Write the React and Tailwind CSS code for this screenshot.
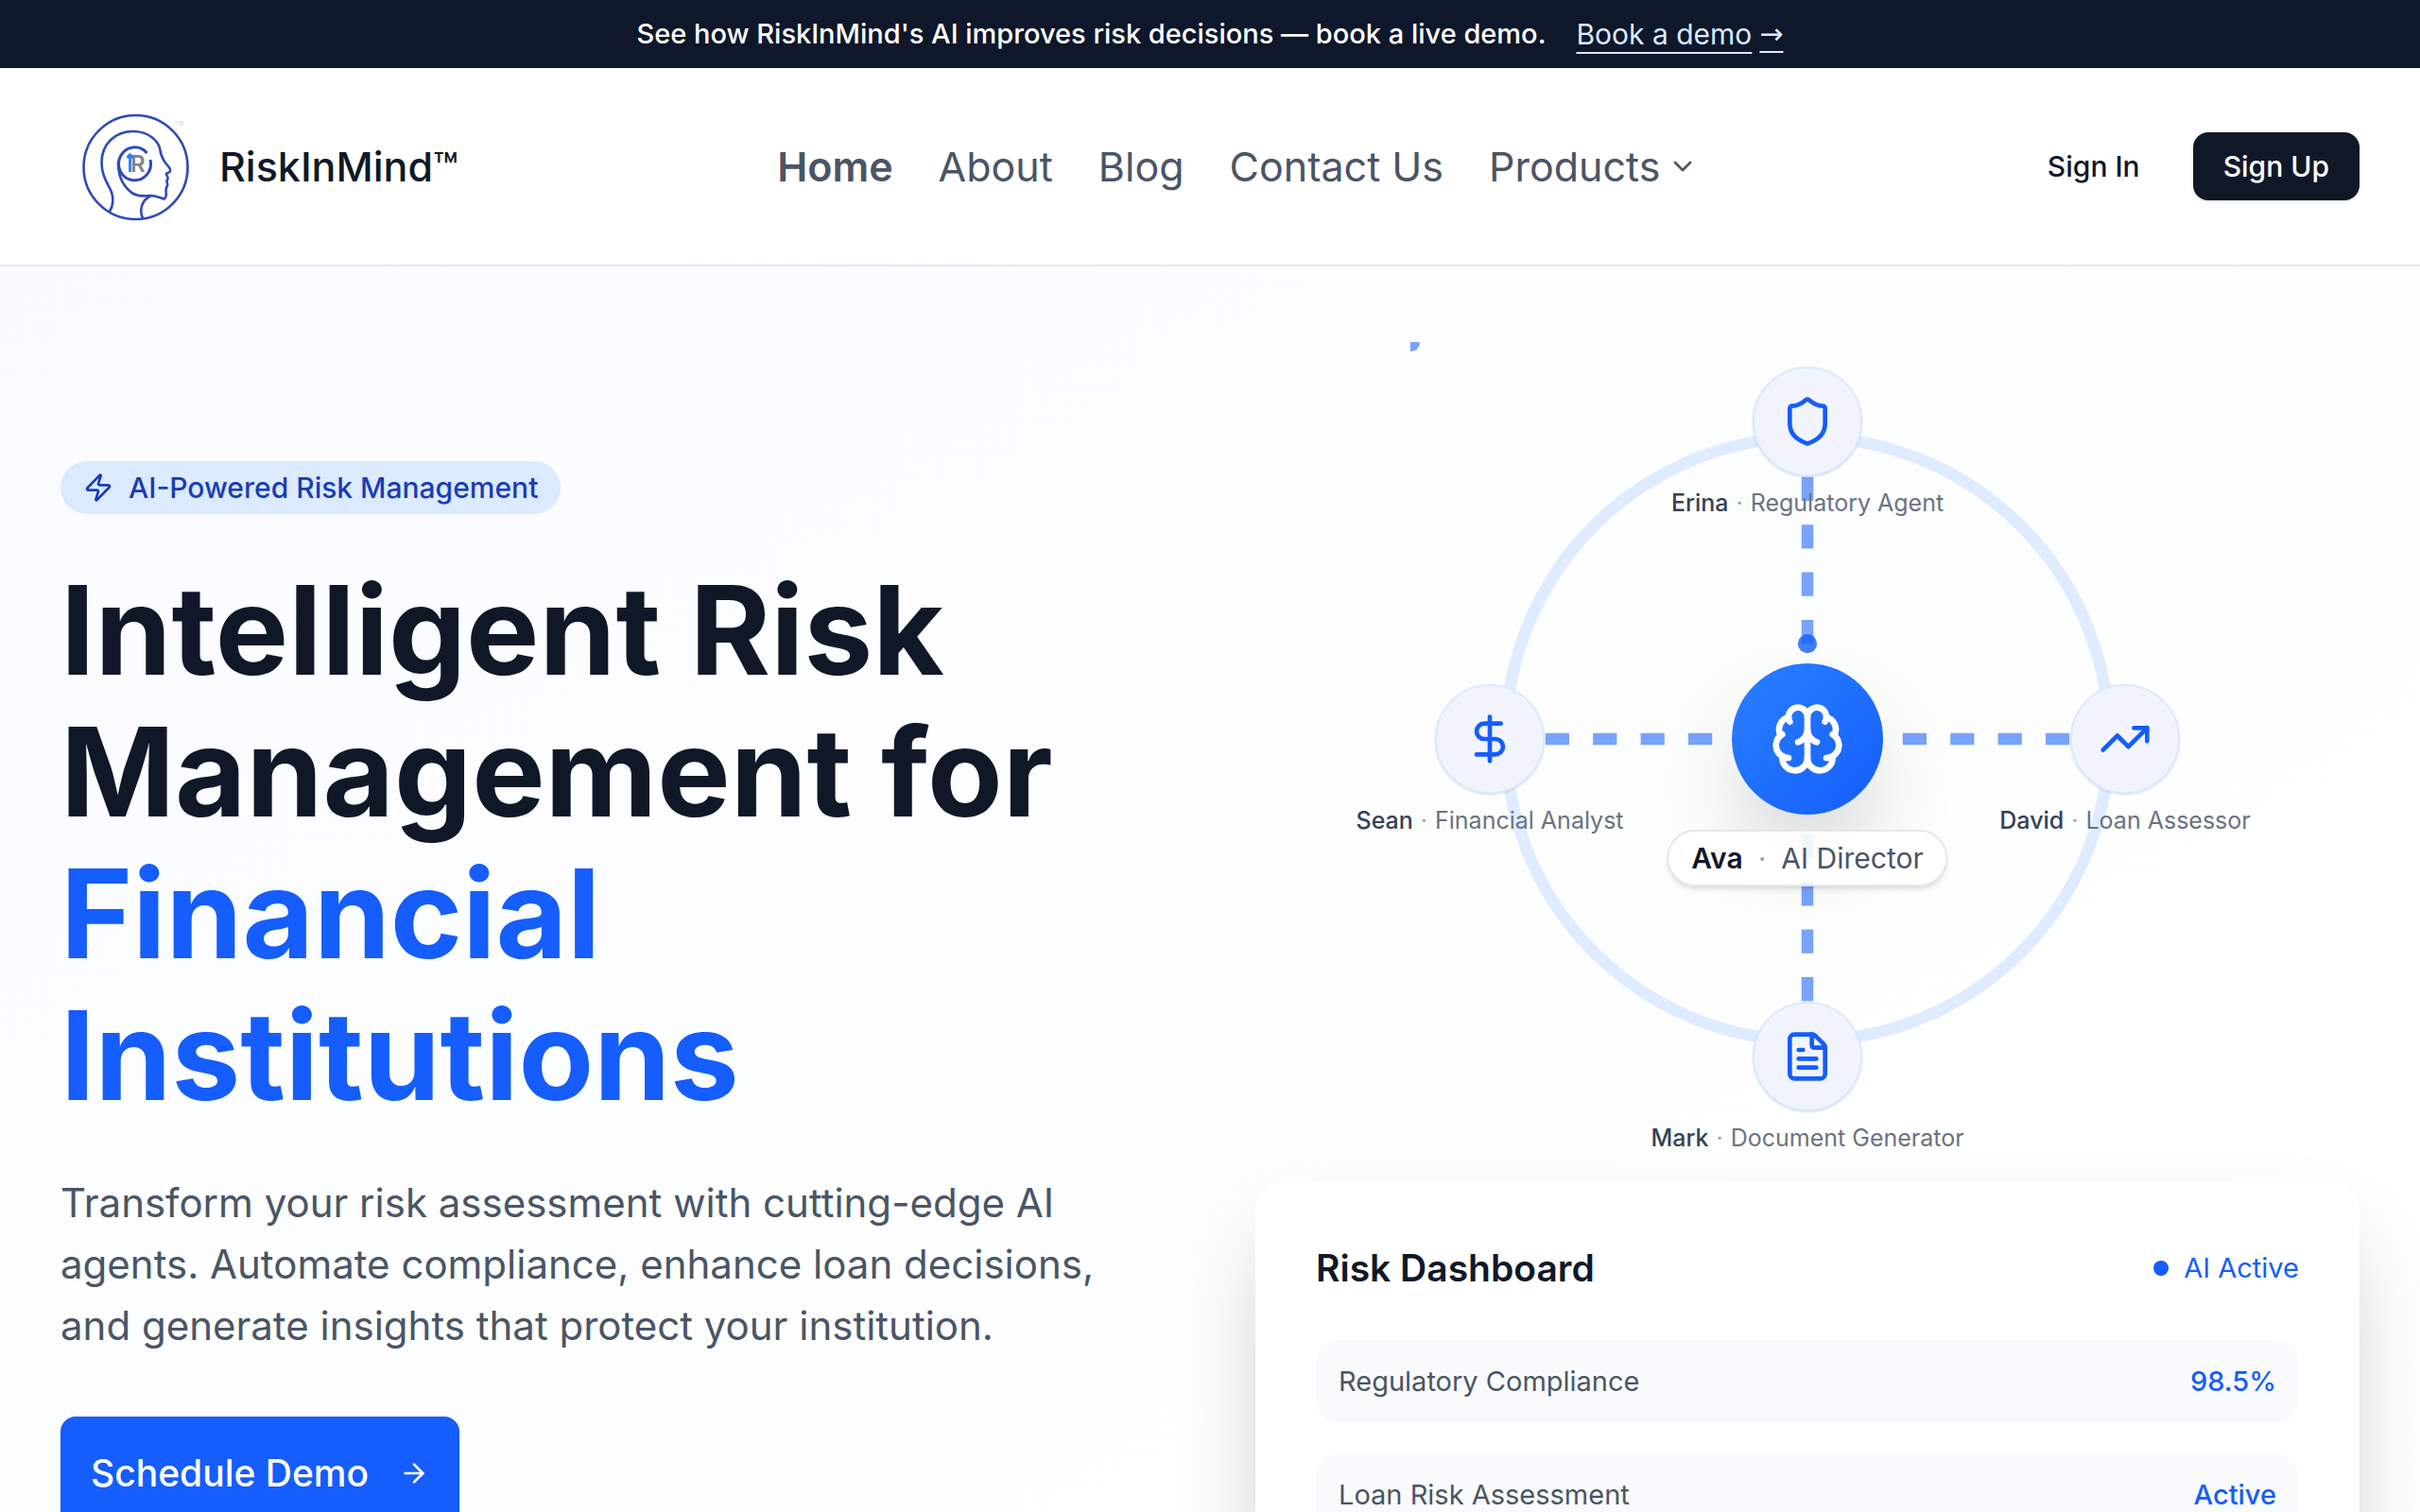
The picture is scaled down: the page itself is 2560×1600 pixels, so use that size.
import { ArrowRight, Brain, ChevronDown, DollarSign, FileText, Shield, TrendingUp, Zap } from "lucide-react";

const navLinks = ["About", "Blog", "Contact Us"];

const agents = [
    { name: "Erina", role: "Regulatory Agent", icon: Shield, place: "left-[50%] top-[10%]" },
    { name: "David", role: "Loan Assessor", icon: TrendingUp, place: "left-[90%] top-[50%]" },
    { name: "Mark", role: "Document Generator", icon: FileText, place: "left-[50%] top-[90%]" },
    { name: "Sean", role: "Financial Analyst", icon: DollarSign, place: "left-[10%] top-[50%]" },
];

const metrics = [
    { label: "Regulatory Compliance", value: "98.5%" },
    { label: "Loan Risk Assessment", value: "Active" },
];

function Logo() {
    return (
        <svg viewBox="0 0 160 160" className="w-40 h-40" fill="none" stroke="#2f4ab8" strokeWidth="2.6" strokeLinecap="round" strokeLinejoin="round">
            <circle cx="79.5" cy="81" r="55" />
            {/* Head outline */}
            <path d="M52 127.500C56 122 56.500 112 53 105C48 95 43.500 88 43.500 76C43.500 56 58 43 77 43C93 43 104 53 105.500 63C106 68 107 70 110 75L115.500 82C117 85 116 87 112 87.500C111.500 90 114.500 91 113.500 93.500C112 95 112 96 113 98C114 101 111.500 102 111.500 105C112 109 112.500 113 109.500 114.500C104 113 100 110.500 94 111C86 112 78 111 73 106C64 98 61 88 61 76" />
            <path d="M95 111.500C86 116 83 126 87 135" />
            {/* Inner ring */}
            <path d="M91.500 66A17 17.500 0 1 0 95 73" strokeWidth="3" strokeLinecap="butt" />
            <text x="74" y="86" fontSize="24" fontFamily="Inter, sans-serif" fontWeight="600" fill="#7c8494" stroke="none">R</text>
            <path d="M73.500 86V69M70.500 71L73.500 67.500L76.500 71" stroke="#2b7fff" strokeWidth="2.800" strokeLinecap="butt" />
            <text x="121" y="37" fontSize="6" fontFamily="Inter, sans-serif" fill="#c9d3ea" stroke="none">TM</text>
        </svg>
    );
}

function Header() {
    return (
        <header className="flex items-center justify-between bg-white border-b-2 border-gray-200 px-16 py-6">
            <a href="#" className="flex items-center gap-2">
                <Logo />
                <span className="text-[43px] leading-[56px] font-medium text-gray-900">RiskInMind™</span>
            </a>

            <nav className="flex items-center gap-12 text-[43px] leading-[56px] text-gray-600">
                <a href="#" className="font-semibold">Home</a>
                {navLinks.map((link) => (
                    <a key={link} href="#">{link}</a>
                ))}
                <button type="button" className="flex items-center gap-2">
                    Products
                    <ChevronDown className="w-8 h-8" />
                </button>
            </nav>

            <div className="flex items-center gap-6 text-[30px] leading-10 font-medium">
                <button type="button" className="px-8 py-4 text-gray-900">Sign In</button>
                <button type="button" className="px-8 py-4 rounded-2xl bg-gray-900 text-white shadow-sm">Sign Up</button>
            </div>
        </header>
    );
}

function AgentDiagram() {
    return (
        <div className="relative w-[840px] h-[840px] mx-auto">
            <svg viewBox="0 0 100 100" className="w-full h-full" fill="none">
                <circle cx="50" cy="50" r="38" stroke="#dfebff" strokeWidth="1.5" />
                <g stroke="#78a3fb" strokeWidth="1.5" strokeDasharray="3 3">
                    <path d="M50 50V10" />
                    <path d="M50 50H90" />
                    <path d="M50 50V90" />
                    <path d="M50 50H10" />
                </g>
                <circle cx="50" cy="38" r="1.2" fill="#155dfc" fillOpacity="0.8" />
                <circle cx="0" cy="0" r="1.2" fill="#78a3fb" />
            </svg>

            {/* Outer agents */}
            {agents.map(({ name, role, icon: Icon, place }) => (
                <div key={name} className={`absolute ${place} -translate-x-1/2 -translate-y-1/2`}>
                    <div className="flex items-center justify-center w-[116px] h-[116px] rounded-full bg-[#f1f4fd] border-2 border-blue-100 shadow-sm">
                        <Icon className="w-14 h-14 text-blue-600" />
                    </div>
                    <div className="absolute top-full left-1/2 -translate-x-1/2 mt-3 flex gap-2 text-[25px] leading-8 whitespace-nowrap">
                        <span className="font-medium text-gray-700">{name}</span>
                        <span className="text-gray-400">·</span>
                        <span className="text-gray-500">{role}</span>
                    </div>
                </div>
            ))}

            {/* Director in the middle */}
            <div className="absolute left-1/2 top-1/2 -translate-x-1/2 -translate-y-1/2">
                <div className="flex items-center justify-center w-40 h-40 rounded-full bg-linear-to-br from-[#2b7fff] to-[#155dfc] shadow-[0_50px_100px_-24px_rgba(0,0,0,0.25)]">
                    <Brain className="w-20 h-20 text-white" />
                </div>
                <div className="absolute top-full left-1/2 -translate-x-1/2 mt-4 flex gap-4 px-6 py-2 rounded-full bg-white/90 border-2 border-gray-200 shadow-md text-[30px] leading-10 whitespace-nowrap">
                    <span className="font-semibold text-gray-900">Ava</span>
                    <span className="text-gray-400">·</span>
                    <span className="text-gray-600">AI Director</span>
                </div>
            </div>
        </div>
    );
}

function RiskDashboard() {
    return (
        <section className="relative mt-12 p-16 rounded-[32px] bg-white shadow-[0_50px_100px_-24px_rgba(0,0,0,0.25)]">
            <div className="flex items-center justify-between mb-12">
                <h2 className="text-[39px] leading-[56px] font-semibold text-gray-900">Risk Dashboard</h2>
                <div className="flex items-center gap-4 text-[29px] leading-10 text-blue-600">
                    <span className="w-4 h-4 rounded-full bg-blue-600" />
                    AI Active
                </div>
            </div>

            <dl className="space-y-8 text-[29px] leading-10">
                {metrics.map((metric) => (
                    <div key={metric.label} className="flex items-center justify-between p-6 rounded-3xl bg-gray-50">
                        <dt className="text-gray-600">{metric.label}</dt>
                        <dd className="font-medium text-blue-600">{metric.value}</dd>
                    </div>
                ))}
            </dl>
        </section>
    );
}

function App() {
    return (
        <div className="h-screen overflow-hidden bg-white font-['Inter',sans-serif]">
            <div className="flex items-center justify-center gap-8 bg-slate-900 py-4 text-[29px] leading-10">
                <p className="font-medium text-white">
                    See how RiskInMind's AI improves risk decisions — book a live demo.
                </p>
                <a href="#" className="flex gap-2 text-[30px] text-blue-100 underline underline-offset-8 decoration-2">
                    <span>Book a demo</span>
                    <span className="font-['DejaVu_Sans',sans-serif]">→</span>
                </a>
            </div>

            <Header />

            <main className="grid grid-cols-2 gap-24 px-16 py-20 bg-linear-to-br from-[#f9fbff] via-[#fcfefe] to-white">
                <div className="pt-[126px]">
                    <div className="flex w-fit items-center gap-4 px-6 py-2 rounded-full bg-blue-100 text-blue-800 text-[30px] leading-10 font-medium">
                        <Zap className="w-8 h-8" />
                        AI-Powered Risk Management
                    </div>

                    <h1 className="mt-12 text-[130px] leading-[150px] font-bold text-gray-900">
                        Intelligent Risk Management for
                        <span className="block text-blue-600">Financial Institutions</span>
                    </h1>

                    <p className="mt-12 text-[42px] leading-[65px] text-gray-600">
                        Transform your risk assessment with cutting-edge AI agents. Automate compliance, enhance loan
                        decisions, and generate insights that protect your institution.
                    </p>

                    <button type="button" className="mt-16 flex items-center gap-8 h-[120px] px-8 rounded-2xl bg-blue-600 text-white text-[39px] font-medium">
                        Schedule Demo
                        <ArrowRight className="w-8 h-8" />
                    </button>
                </div>

                <div>
                    <AgentDiagram />
                    <RiskDashboard />
                </div>
            </main>
        </div>
    );
}

export default App;
